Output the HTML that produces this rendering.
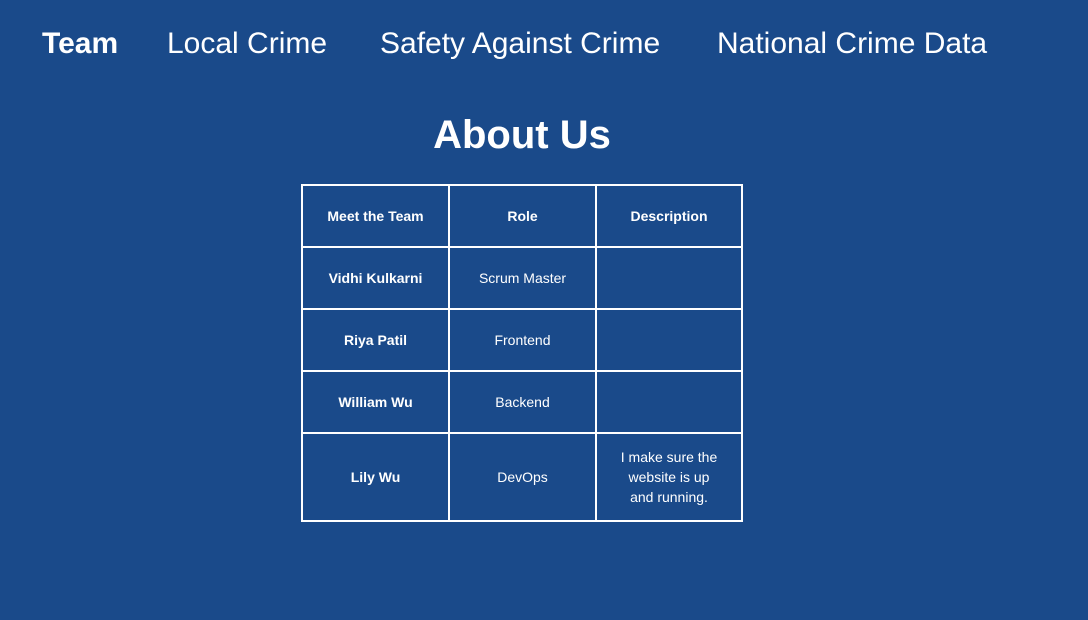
<!DOCTYPE html>
<html><head><style>
html,body{margin:0;padding:0;}
body{width:1088px;height:620px;background:#1a4a8a;color:#fff;font-family:"Liberation Sans",sans-serif;position:relative;overflow:hidden;}
.nav{position:absolute;top:26px;font-size:30px;line-height:36px;white-space:nowrap;}
h1{position:absolute;top:112px;left:0;width:1044px;text-align:center;margin:0;font-size:40px;line-height:46px;font-weight:bold;}
table{position:absolute;left:301px;top:184px;border-collapse:collapse;}
td{border:2px solid #fff;text-align:center;font-size:14px;line-height:20px;padding:0 6px;box-sizing:border-box;}
td.b{font-weight:bold;}
</style></head><body>
<div class="nav" style="left:42px;font-weight:bold;">Team</div>
<div class="nav" style="left:167px;">Local Crime</div>
<div class="nav" style="left:380px;">Safety Against Crime</div>
<div class="nav" style="left:717px;">National Crime Data</div>
<h1>About Us</h1>
<table>
<tr style="height:62px"><td class="b" style="width:147px">Meet the Team</td><td class="b" style="width:147px">Role</td><td class="b" style="width:146px">Description</td></tr>
<tr style="height:62px"><td class="b">Vidhi Kulkarni</td><td>Scrum Master</td><td></td></tr>
<tr style="height:62px"><td class="b">Riya Patil</td><td>Frontend</td><td></td></tr>
<tr style="height:62px"><td class="b">William Wu</td><td>Backend</td><td></td></tr>
<tr style="height:88px"><td class="b">Lily Wu</td><td>DevOps</td><td>I make sure the<br>website is up<br>and running.</td></tr>
</table>
</body></html>
